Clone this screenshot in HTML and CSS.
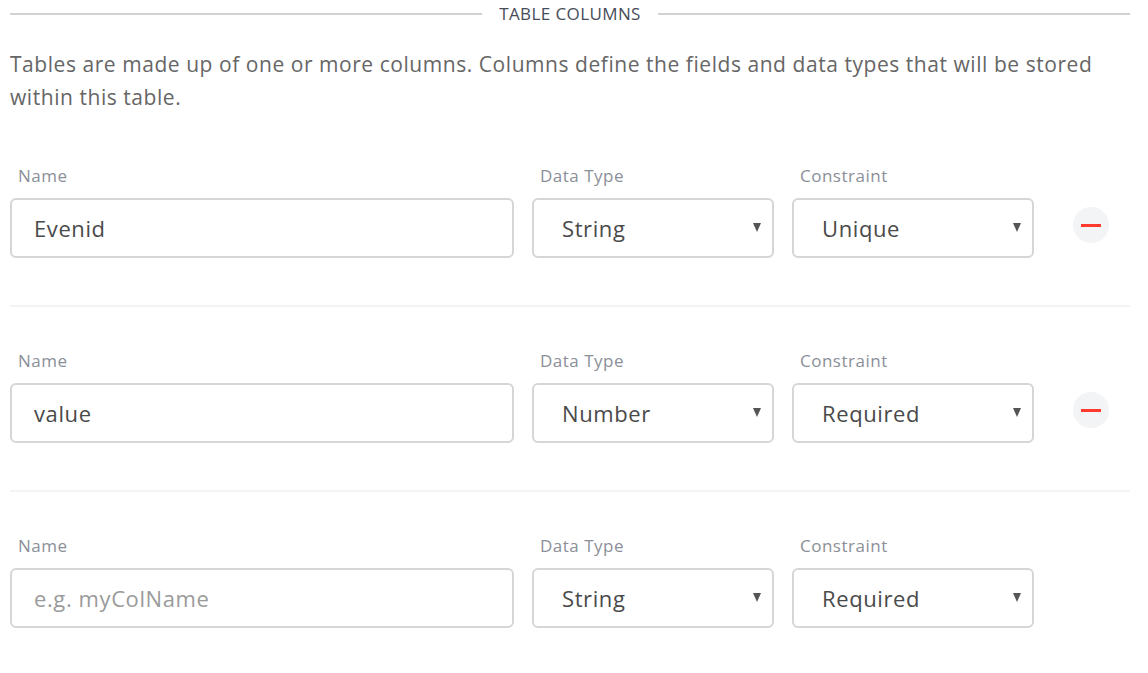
FILE: index.html
```html
<!DOCTYPE html>
<html lang="en">
<head>
<meta charset="utf-8">
<title>Table Columns</title>
<link rel="stylesheet" href="styles.css">
</head>
<body>
<div class="page">
  <div class="section-title">
    <span class="rule"></span>
    <span class="title-text">TABLE COLUMNS</span>
    <span class="rule"></span>
  </div>
  <p class="desc">Tables are made up of one or more columns. Columns define the fields and data types that will be stored within this table.</p>

  <div class="col-row">
    <div class="field">
      <label class="lbl">Name</label>
      <input class="box text-input" type="text" value="Evenid" placeholder="e.g. myColName">
    </div>
    <div class="field">
      <label class="lbl">Data Type</label>
      <div class="select-wrap"><select class="box sel"><option selected>String</option><option>Number</option></select></div>
    </div>
    <div class="field">
      <label class="lbl">Constraint</label>
      <div class="select-wrap"><select class="box sel"><option selected>Unique</option><option>Required</option></select></div>
    </div>
    <div class="action"><button class="remove" aria-label="Remove column"><span class="minus"></span></button></div>
  </div>

  <div class="col-row">
    <div class="field">
      <label class="lbl">Name</label>
      <input class="box text-input" type="text" value="value" placeholder="e.g. myColName">
    </div>
    <div class="field">
      <label class="lbl">Data Type</label>
      <div class="select-wrap"><select class="box sel"><option>String</option><option selected>Number</option></select></div>
    </div>
    <div class="field">
      <label class="lbl">Constraint</label>
      <div class="select-wrap"><select class="box sel"><option>Unique</option><option selected>Required</option></select></div>
    </div>
    <div class="action"><button class="remove" aria-label="Remove column"><span class="minus"></span></button></div>
  </div>

  <div class="col-row last">
    <div class="field">
      <label class="lbl">Name</label>
      <input class="box text-input" type="text" value="" placeholder="e.g. myColName">
    </div>
    <div class="field">
      <label class="lbl">Data Type</label>
      <div class="select-wrap"><select class="box sel"><option selected>String</option><option>Number</option></select></div>
    </div>
    <div class="field">
      <label class="lbl">Constraint</label>
      <div class="select-wrap"><select class="box sel"><option>Unique</option><option selected>Required</option></select></div>
    </div>
    <div class="action"></div>
  </div>
</div>
</body>
</html>
```

FILE: styles.css
```css
* { box-sizing: border-box; }
html, body { margin: 0; padding: 0; background: #fff; }
body {
  font-family: "Open Sans", "Noto Sans", "Liberation Sans", sans-serif;
  color: #555;
}
.page {
  padding: 0 18px 0 10px;
}
.section-title {
  display: flex;
  align-items: center;
  height: 28px;
  gap: 17px;
}
.rule {
  flex: 1;
  height: 2px;
  background: #d2d2d2;
}
.title-text {
  font-size: 17px;
  color: #464c58;
  letter-spacing: 0.4px;
  line-height: 28px;
}
.desc {
  margin: 20px 0 0;
  font-size: 21px;
  letter-spacing: 0.55px;
  line-height: 33px;
  color: #666;
}
.col-row {
  display: grid;
  grid-template-columns: 504px 242px 242px 1fr;
  column-gap: 18px;
  padding: 42px 0 47px;
  border-bottom: 2px solid #f4f4f4;
}
.col-row.last { border-bottom: 0; }
.desc + .col-row { padding-top: 50px; }
.field {
  display: flex;
  flex-direction: column;
  gap: 10px;
}
.lbl {
  font-size: 17px;
  letter-spacing: 0.5px;
  line-height: 24px;
  color: #8b8f98;
  padding-left: 8px;
}
.box {
  height: 60px;
  border: 2px solid #d6d6d6;
  border-radius: 6px;
  background: #fff;
  font-family: inherit;
  font-size: 22px;
  letter-spacing: 0.6px;
  color: #4a4a4a;
  outline: none;
  width: 100%;
  margin: 0;
}
.text-input {
  padding: 0 22px;
}
.text-input::placeholder { color: #9a9a9a; }
.select-wrap { position: relative; }
.sel {
  -webkit-appearance: none;
  appearance: none;
  padding: 0 40px 0 28px;
}
.select-wrap::after {
  content: "";
  position: absolute;
  right: 13px;
  top: 25px;
  width: 0;
  height: 0;
  border-left: 4px solid transparent;
  border-right: 4px solid transparent;
  border-top: 9px solid #555;
}
.action {
  display: flex;
  align-items: flex-end;
  justify-content: flex-end;
  padding-bottom: 15px;
  padding-right: 21px;
}
.remove {
  width: 36px;
  height: 36px;
  border-radius: 50%;
  border: 0;
  background: #f3f4f6;
  display: flex;
  align-items: center;
  justify-content: center;
  padding: 0;
  cursor: pointer;
}
.minus {
  display: block;
  width: 20px;
  height: 3px;
  background: #ff3b30;
}
```
